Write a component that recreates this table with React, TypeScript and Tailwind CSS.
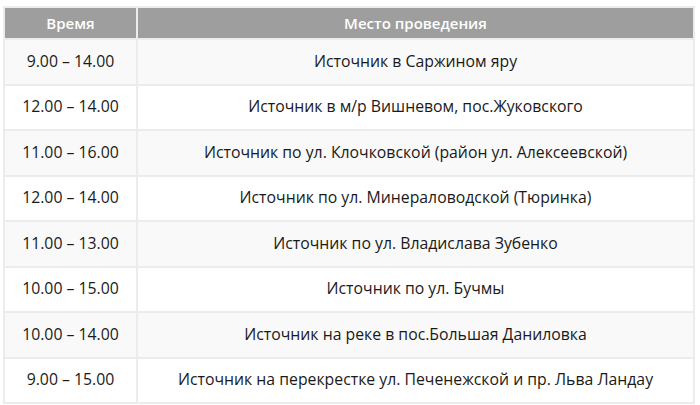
const rows = [
  ["9.00 – 14.00", "Источник в Саржином яру"],
  ["12.00 – 14.00", "Источник в м/р Вишневом, пос.Жуковского"],
  ["11.00 – 16.00", "Источник по ул. Клочковской (район ул. Алексеевской)"],
  ["12.00 – 14.00", "Источник по ул. Минераловодской (Тюринка)"],
  ["11.00 – 13.00", "Источник по ул. Владислава Зубенко"],
  ["10.00 – 15.00", "Источник по ул. Бучмы"],
  ["10.00 – 14.00", "Источник на реке в пос.Большая Даниловка"],
  ["9.00 – 15.00", "Источник на перекрестке ул. Печенежской и пр. Льва Ландау"],
];

export default function App() {
  return (
    <div className="w-[700px] h-[405px] bg-white pt-[6px] pl-[3px] font-['Open_Sans',sans-serif]">
      <table className="w-[692px] border-collapse text-[15.8px] text-[#1a1a1a]">
        <thead>
          <tr className="h-[32px] bg-[#9e9e9e] text-white text-[15px]">
            <th className="w-[133px] border-2 border-[#ececec] font-semibold">Время</th>
            <th className="border-2 border-[#ececec] font-semibold">Место проведения</th>
          </tr>
        </thead>
        <tbody>
          {rows.map(([time, place], i) => (
            <tr key={i} className={i % 2 === 0 ? "h-[45.5px] bg-[#f9f9f9]" : "h-[45.5px] bg-white"}>
              <td className="border-2 border-[#ececec] text-center">{time}</td>
              <td className="border-2 border-[#ececec] text-center">{place}</td>
            </tr>
          ))}
        </tbody>
      </table>
    </div>
  );
}
